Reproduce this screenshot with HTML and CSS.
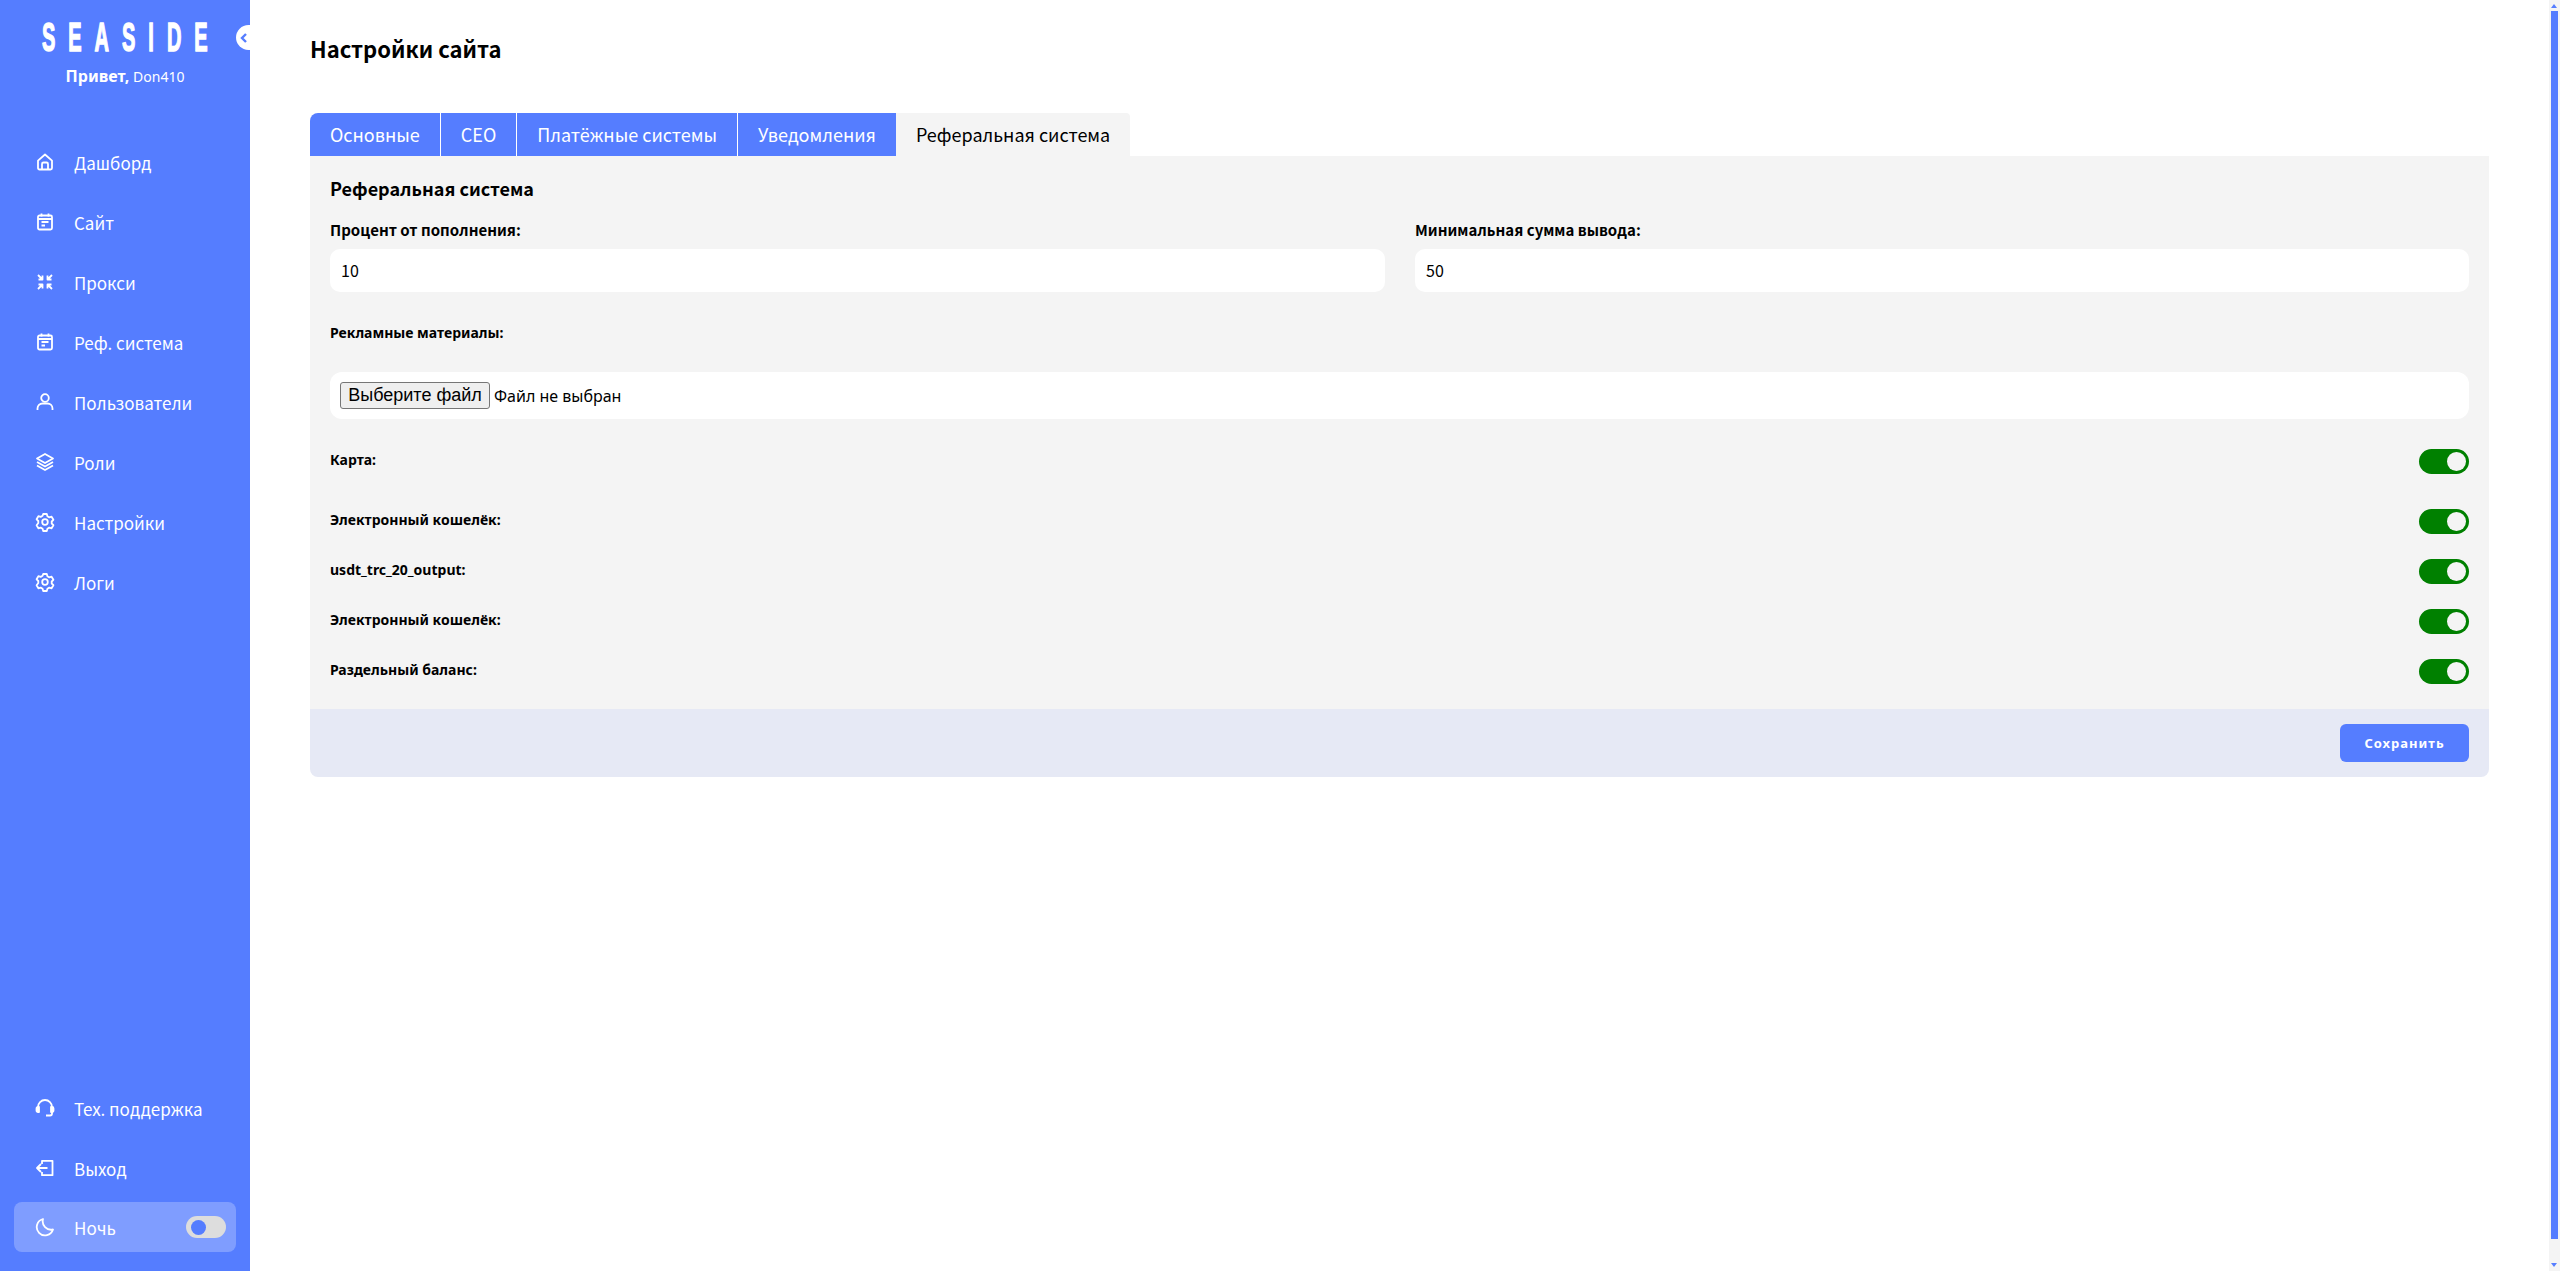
FILE: index.html
```html
<!DOCTYPE html>
<html lang="ru">
<head>
<meta charset="utf-8">
<title>Настройки сайта</title>
<link rel="stylesheet" href="styles.css">
</head>
<body>
<div class="app">
  <aside class="sidebar">
    <div class="brand">
      <div class="logo"><span>SEASIDE</span></div>
      <div class="hello"><b>Привет,</b> <span>Don410</span></div>
      <button class="collapse" type="button" aria-label="Свернуть">
        <svg viewBox="0 0 12 12" width="12" height="12"><path d="M8 2 4 6l4 4" fill="none" stroke="#557dff" stroke-width="2.4"/></svg>
      </button>
    </div>
    <nav class="nav">
      <a class="item"><svg class="ico" viewBox="0 0 20 20"><path d="M3 8.600 10 2.500l7 6.100V16a1.500 1.500 0 0 1-1.500 1.500h-11A1.500 1.500 0 0 1 3 16Z"/><path d="M7 17.500V12a1.500 1.500 0 0 1 1.500-1.500h3A1.500 1.500 0 0 1 13 12v5.500"/></svg>Дашборд</a>
      <a class="item"><svg class="ico" viewBox="0 0 20 20"><rect x="3" y="3.500" width="14" height="14" rx="1.500"/><path d="M6.500 1.500v3M13.500 1.500v3M3 7h14M6.500 10h7M6.500 13.500h3.500"/></svg>Сайт</a>
      <a class="item"><svg class="ico" viewBox="0 0 20 20"><path d="M3 3l4.500 4.500M7.500 3.500v4h-4M17 3l-4.500 4.500M12.500 3.500v4h4M3 17l4.500-4.500M7.500 16.500v-4h-4M17 17l-4.500-4.500M12.500 16.500v-4h4"/></svg>Прокси</a>
      <a class="item"><svg class="ico" viewBox="0 0 20 20"><rect x="3" y="3.500" width="14" height="14" rx="1.500"/><path d="M6.500 1.500v3M13.500 1.500v3M3 7h14M6.500 10h7M6.500 13.500h3.500"/></svg>Реф. система</a>
      <a class="item"><svg class="ico" viewBox="0 0 20 20"><circle cx="10" cy="6" r="3.800"/><path d="M2.500 18v-1.500a5 5 0 0 1 5-5h5a5 5 0 0 1 5 5V18"/></svg>Пользователи</a>
      <a class="item"><svg class="ico" viewBox="0 0 20 20"><path d="M10 2 18 6.500 10 11 2 6.500Z"/><path d="M2 10l8 4.500 8-4.500M2 13.500 10 18l8-4.500"/></svg>Роли</a>
      <a class="item"><svg class="ico" viewBox="0 0 20 20"><circle cx="10" cy="10" r="2.800"/><path d="M8.200 2h3.600l.6 2.300 1.900 1.100 2.300-.7 1.800 3.100-1.700 1.700v2l1.700 1.700-1.800 3.100-2.300-.7-1.900 1.100-.6 2.300H8.200l-.6-2.300-1.900-1.100-2.300.7-1.800-3.100L3.300 11V9L1.600 7.300l1.800-3.100 2.300.7 1.900-1.100Z"/></svg>Настройки</a>
      <a class="item"><svg class="ico" viewBox="0 0 20 20"><circle cx="10" cy="10" r="2.800"/><path d="M8.200 2h3.600l.6 2.300 1.900 1.100 2.300-.7 1.800 3.100-1.700 1.700v2l1.700 1.700-1.800 3.100-2.300-.7-1.900 1.100-.6 2.300H8.200l-.6-2.300-1.900-1.100-2.300.7-1.800-3.100L3.300 11V9L1.600 7.300l1.800-3.100 2.300.7 1.900-1.100Z"/></svg>Логи</a>
    </nav>
    <div class="bottom">
      <a class="item"><svg class="ico" viewBox="0 0 20 20"><path d="M3 12V9a7 7 0 0 1 14 0v3"/><path class="solid" d="M1.500 10.500A1.500 1.500 0 0 1 3 9h1v5H3a1.500 1.500 0 0 1-1.500-1.500ZM16 9h1a1.500 1.500 0 0 1 1.500 1.500v2A1.500 1.500 0 0 1 17 14h-1Z"/><path d="M17 14v1.500a2 2 0 0 1-2 2h-4"/></svg>Тех. поддержка</a>
      <a class="item"><svg class="ico" viewBox="0 0 20 20"><path d="M7 6V2.800h10.500v14.400H7V14"/><path d="M12.500 10H2M6 6l-4 4 4 4"/></svg>Выход</a>
      <div class="night">
        <svg class="ico" viewBox="0 0 20 20"><path d="M8 2a8.300 8.300 0 1 0 10 10.500A8.500 8.500 0 0 1 8 2Z"/></svg>
        <span class="night-label">Ночь</span>
        <span class="night-switch"><i></i></span>
      </div>
    </div>
  </aside>

  <main class="main">
    <h1 class="title">Настройки сайта</h1>
    <div class="tabs">
      <a class="tab">Основные</a>
      <a class="tab">СЕО</a>
      <a class="tab">Платёжные системы</a>
      <a class="tab">Уведомления</a>
      <a class="tab active">Реферальная система</a>
    </div>
    <section class="panel">
      <div class="panel-body">
        <h2 class="panel-title">Реферальная система</h2>
        <div class="cols">
          <label class="field"><span class="label cjk">Процент от пополнения:</span><input class="input" type="text" value="10"></label>
          <label class="field"><span class="label cjk">Минимальная сумма вывода:</span><input class="input" type="text" value="50"></label>
        </div>
        <div class="label promo">Рекламные материалы:</div>
        <div class="file"><button class="file-btn" type="button">Выберите файл</button><span class="file-name">Файл не выбран</span></div>
        <div class="row first"><span class="label">Карта:</span><span class="switch"><i></i></span></div>
        <div class="row tall"><span class="label">Электронный кошелёк:</span><span class="switch"><i></i></span></div>
        <div class="row"><span class="label">usdt_trc_20_output:</span><span class="switch"><i></i></span></div>
        <div class="row"><span class="label">Электронный кошелёк:</span><span class="switch"><i></i></span></div>
        <div class="row"><span class="label">Раздельный баланс:</span><span class="switch"><i></i></span></div>
      </div>
      <div class="panel-foot"><button class="save" type="button">Сохранить</button></div>
    </section>
  </main>

  <div class="scrollbar"><span class="arrow up"></span><span class="thumb"></span><span class="arrow down"></span></div>
</div>
</body>
</html>
```
FILE: styles.css
```css
* { box-sizing: border-box; }
html, body { margin: 0; height: 100%; overflow: hidden; }
body { font-family: "Noto Sans", "Open Sans", sans-serif; color: #000; background: #fff; }
.app { display: flex; height: 1271px; }

.sidebar { width: 250px; flex: none; background: #557dff; color: #fff; display: flex; flex-direction: column; font-family: "Noto Sans CJK KR", "Noto Sans", sans-serif; }
.brand { position: relative; height: 132px; padding-top: 19px; text-align: center; font-family: "Noto Sans", sans-serif; }
.logo { display: flex; justify-content: center; height: 36px; font-family: "Liberation Sans", sans-serif; font-weight: 700; font-size: 40px; line-height: 36px; letter-spacing: 26px; white-space: nowrap; }
.logo span { display: block; padding-left: 26px; transform: scaleX(.5); -webkit-text-stroke: 1.5px #fff; }
.hello { margin-top: 11px; font-size: 14px; line-height: 20px; }
.hello b { font-size: 16px; }
.hello span { font-size: 14px; }
.collapse { position: absolute; left: 236px; top: 25px; width: 14px; height: 25px; padding: 0 0 0 2px; border: 0; border-radius: 13px 0 0 13px; background: #fff; display: flex; align-items: center; }

.nav { flex: 1; display: flex; flex-direction: column; }
.item { display: flex; align-items: center; height: 60px; padding-left: 35px; font-size: 17px; color: #fff; gap: 19px; flex: none; }
.ico { width: 20px; height: 20px; flex: none; fill: none; stroke: #fff; stroke-width: 1.800; stroke-linejoin: round; }
.ico .solid { fill: #fff; }
.bottom { padding-bottom: 19px; }
.night { margin: 4px 14px 0; height: 50px; border-radius: 8px; background: rgba(255,255,255,.25); display: flex; align-items: center; padding: 0 10px 0 21px; font-size: 17px; }
.night-label { margin-left: 19px; flex: 1; }
.night-switch { width: 40px; height: 22px; border-radius: 11px; background: #ddd; display: flex; align-items: center; padding-left: 5px; }
.night-switch i { width: 15px; height: 15px; border-radius: 50%; background: #557dff; }

.main { flex: 1; min-width: 0; padding: 0 60px 0 60px; }
.title { margin: 0; padding-top: 32px; height: 113px; font-family: "Noto Sans CJK KR", sans-serif; font-size: 22px; line-height: 32px; font-weight: 700; }
.tabs { display: flex; height: 43px; gap: 1px; font-family: "Noto Sans CJK KR", sans-serif; }
.tab { background: #557dff; color: #fff; font-size: 18px; line-height: 43px; padding: 0 20px; }
.tab:first-child { border-radius: 8px 0 0 0; }
.tab.active { background: #f4f4f4; color: #000; margin-left: -1px; border-radius: 0 4px 0 0; }

.panel { width: 2179px; }
.panel-body { height: 553px; background: #f4f4f4; padding: 20px 20px 0; }
.panel-title { margin: 0; font-family: "Noto Sans CJK KR", sans-serif; font-size: 18px; line-height: 24px; font-weight: 700; }
.cols { display: grid; grid-template-columns: 1055px 1054px; gap: 30px; margin-top: 20px; }
.field { display: block; }
.label { display: block; font-size: 14px; line-height: 20px; font-weight: 700; }
.label.cjk { font-family: "Noto Sans CJK KR", sans-serif; font-size: 15px; }
.input { display: block; width: 100%; height: 43px; margin-top: 9px; border: 0; border-radius: 10px; background: #fff; padding: 0 11px; font: 16px/43px "Noto Sans CJK KR", sans-serif; color: #000; outline: none; }
.promo { margin-top: 31px; }
.file { margin-top: 29px; height: 47px; border-radius: 12px; background: #fff; display: flex; align-items: center; padding-left: 10px; }
.file-btn { width: 150px; height: 27px; padding: 0; border: 1px solid #767676; border-radius: 3px; background: #efefef; color: #000; font: 18px "Liberation Sans", Arial, sans-serif; }
.file-name { margin-left: 4px; font-size: 16px; }
.row { display: flex; justify-content: space-between; height: 25px; margin-top: 25px; }
.row.first { margin-top: 30px; }
.row.tall { margin-top: 35px; }
.row .label { line-height: 20px; margin-top: 1px; }
.switch { width: 50px; height: 25px; border-radius: 13px; background: #008000; display: flex; align-items: center; justify-content: flex-end; padding-right: 3px; }
.switch i { width: 19px; height: 19px; border-radius: 50%; background: #f4f4f4; }

.panel-foot { height: 68px; background: #e6e9f5; border-radius: 0 0 8px 8px; padding: 15px 20px 0; display: flex; justify-content: flex-end; }
.save { width: 129px; height: 38px; border: 0; border-radius: 6px; background: #557dff; color: #fff; font: 700 13px "Noto Sans", sans-serif; letter-spacing: 1px; }

.scrollbar { width: 11px; flex: none; background: #f4f4f4; padding: 0 2px; display: flex; flex-direction: column; align-items: stretch; }
.arrow { height: 11px; flex: none; position: relative; }
.arrow::after { content: ""; position: absolute; left: 0; border: 3.500px solid transparent; }
.up::after { top: 4px; border-top: 0; border-bottom: 4px solid #557dff; }
.down::after { bottom: 4px; border-bottom: 0; border-top: 4px solid #557dff; }
.thumb { flex: 1; margin-bottom: 21px; background: #557dff; }
```
